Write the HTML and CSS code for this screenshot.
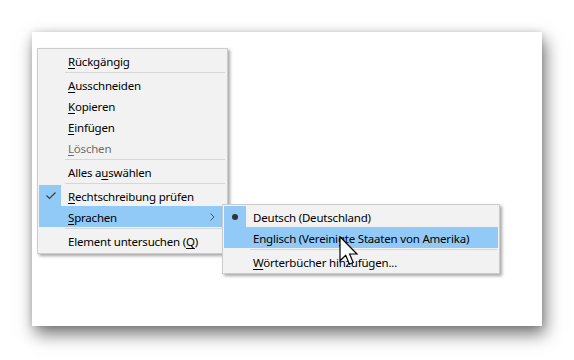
FILE: index.html
```html
<!DOCTYPE html>
<html lang="de">
<head>
  <meta charset="UTF-8">
  <title>Kontextmenü</title>
  <link rel="stylesheet" href="styles.css">
</head>
<body>
  <div class="window">
    <div class="menu main-menu">
      <div class="item"><span class="mark"></span><span class="label"><u>R</u>ückgängig</span></div>
      <div class="sep"></div>
      <div class="item"><span class="mark"></span><span class="label"><u>A</u>usschneiden</span></div>
      <div class="item"><span class="mark"></span><span class="label"><u>K</u>opieren</span></div>
      <div class="item"><span class="mark"></span><span class="label"><u>E</u>infügen</span></div>
      <div class="item disabled"><span class="mark"></span><span class="label"><u>L</u>öschen</span></div>
      <div class="sep"></div>
      <div class="item"><span class="mark"></span><span class="label">Alles a<u>u</u>swählen</span></div>
      <div class="sep"></div>
      <div class="item checked">
        <span class="mark">
          <svg width="22" height="21" viewBox="0 0 22 21"><polyline points="7.5,10.5 10.5,13.5 16.5,7.5" fill="none" stroke="#404040" stroke-width="1.2"/></svg>
        </span>
        <span class="label"><u>R</u>echtschreibung prüfen</span>
      </div>
      <div class="item active">
        <span class="mark"></span><span class="label"><u>S</u>prachen</span>
        <svg class="chevron" width="5" height="8" viewBox="0 0 5 8"><polyline points="0.5,0.5 4,4 0.5,7.5" fill="none" stroke="#555" stroke-width="1"/></svg>
      </div>
      <div class="sep"></div>
      <div class="item"><span class="mark"></span><span class="label">Element untersuchen (<u>Q</u>)</span></div>

      <div class="menu sub-menu">
        <div class="item checked">
          <span class="mark"><span class="bullet"></span></span><span class="label">Deutsch (Deutschland)</span>
        </div>
        <div class="item active"><span class="mark"></span><span class="label">Englisch (Vereinigte Staaten von Amerika)</span></div>
        <div class="sep"></div>
        <div class="item"><span class="mark"></span><span class="label"><u>W</u>örterbücher hinzufügen...</span></div>
      </div>
    </div>

    <svg class="cursor" width="20" height="30" viewBox="0 0 13 20">
      <path d="M0.5,0.5 L0.5,16.5 L4.3,12.9 L6.8,18.8 L9.3,17.7 L6.9,12 L11.8,12 Z" fill="#fff" stroke="#000" stroke-width="0.8" stroke-linejoin="miter"/>
    </svg>
  </div>
</body>
</html>
```

FILE: styles.css
```css
body {
  margin: 0;
  padding: 32px;
  background-color: #fff;
  font-family: "Noto Sans", "Open Sans", sans-serif;
  font-size: 11.5px;
  letter-spacing: -0.2px;
  color: #000;
}

.window {
  position: relative;
  width: 505px;
  height: 278px;
  padding: 16px 0 0 5px;
  background-color: #fff;
  box-shadow: 3px 8px 16px rgba(0, 0, 0, 0.55), 0 0 6px rgba(0, 0, 0, 0.12);
}

.menu {
  position: relative;
  background-color: #f2f2f2;
  border: 1px solid #cccccc;
  padding: 1px 1px 2px;
  box-shadow: 2px 2px 3px rgba(0, 0, 0, 0.35);
}

.main-menu {
  width: 187px;
}

.sub-menu {
  position: absolute;
  left: 184px;
  top: 155px;
  width: 274px;
  padding-bottom: 1px;
}

.item {
  display: flex;
  align-items: center;
  height: 21px;
  white-space: nowrap;
}

.item .mark {
  display: flex;
  align-items: center;
  justify-content: center;
  width: 22px;
  height: 21px;
  flex-shrink: 0;
}

.item .label {
  margin-left: 7px;
  padding-top: 1px;
}

.item u {
  text-decoration-thickness: 1px;
  text-underline-offset: 2px;
}

.item.checked .mark {
  background-color: #91c9f7;
}

.item.active {
  background-color: #91c9f7;
}

.item.disabled {
  color: #6d6d6d;
}

.chevron {
  margin-left: auto;
  margin-right: 11px;
}

.bullet {
  width: 6px;
  height: 6px;
  border-radius: 50%;
  background-color: #333;
}

.sep {
  height: 1px;
  margin: 1px 1px 1px 26px;
  background-color: #d7d7d7;
}

.cursor {
  position: absolute;
  left: 307px;
  top: 204px;
}
```
